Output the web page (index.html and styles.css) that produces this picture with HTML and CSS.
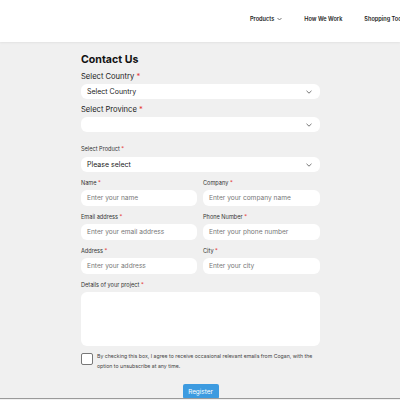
FILE: index.html
```html
<!DOCTYPE html>
<html lang="en">
<head>
    <meta charset="UTF-8">
    <meta name="viewport" content="width=device-width, initial-scale=1.0">
    <title>Contact Us</title>
    <link rel="stylesheet" href="styles.css">
</head>
<body>
    <header class="site-header">
        <nav class="nav">
            <a class="nav-item">Products
                <svg class="nav-caret" width="5" height="4" viewBox="0 0 5 4"><path d="M0.5 1 L2.5 3 L4.5 1" fill="none" stroke="#555" stroke-width="0.8"/></svg>
            </a>
            <a class="nav-item">How We Work</a>
            <a class="nav-item">Shopping Tools</a>
        </nav>
    </header>

    <main class="page">
        <form class="form">
            <h1 class="title">Contact Us</h1>

            <div class="field">
                <label class="label label-lg">Select Country <span class="req">*</span></label>
                <div class="select">
                    <span>Select Country</span>
                    <svg class="chevron" width="6" height="4" viewBox="0 0 6 4"><path d="M0.5 0.8 L3 3.2 L5.5 0.8" fill="none" stroke="#666" stroke-width="0.9"/></svg>
                </div>
            </div>

            <div class="field">
                <label class="label label-lg">Select Province <span class="req">*</span></label>
                <div class="select">
                    <span></span>
                    <svg class="chevron" width="6" height="4" viewBox="0 0 6 4"><path d="M0.5 0.8 L3 3.2 L5.5 0.8" fill="none" stroke="#666" stroke-width="0.9"/></svg>
                </div>
            </div>

            <div class="field field-product">
                <label class="label">Select Product <span class="req">*</span></label>
                <div class="select">
                    <span>Please select</span>
                    <svg class="chevron" width="6" height="4" viewBox="0 0 6 4"><path d="M0.5 0.8 L3 3.2 L5.5 0.8" fill="none" stroke="#666" stroke-width="0.9"/></svg>
                </div>
            </div>

            <div class="row">
                <div class="field">
                    <label class="label">Name <span class="req">*</span></label>
                    <div class="input placeholder">Enter your name</div>
                </div>
                <div class="field">
                    <label class="label">Company <span class="req">*</span></label>
                    <div class="input placeholder">Enter your company name</div>
                </div>
            </div>

            <div class="row">
                <div class="field">
                    <label class="label">Email address <span class="req">*</span></label>
                    <div class="input placeholder">Enter your email address</div>
                </div>
                <div class="field">
                    <label class="label">Phone Number <span class="req">*</span></label>
                    <div class="input placeholder">Enter your phone number</div>
                </div>
            </div>

            <div class="row">
                <div class="field">
                    <label class="label">Address <span class="req">*</span></label>
                    <div class="input placeholder">Enter your address</div>
                </div>
                <div class="field">
                    <label class="label">City <span class="req">*</span></label>
                    <div class="input placeholder">Enter your city</div>
                </div>
            </div>

            <div class="field">
                <label class="label">Details of your project <span class="req">*</span></label>
                <div class="textarea"></div>
            </div>

            <div class="consent">
                <span class="checkbox"></span>
                <p class="consent-text">By checking this box, I agree to receive occasional relevant emails from Cogan, with the option to unsubscribe at any time.</p>
            </div>

            <div class="actions">
                <button type="button" class="btn">Register</button>
            </div>
        </form>
    </main>
    <div class="footer-line"></div>
</body>
</html>
```

FILE: styles.css
```css
body {
    margin: 0;
    background: #f0f0f0;
    font-family: Inter, "Noto Sans", sans-serif;
    color: #222;
    overflow: hidden;
}
.site-header {
    height: 42px;
    background: #fff;
    box-shadow: 0 1px 2px rgba(0, 0, 0, 0.06);
}
.nav {
    display: flex;
    align-items: center;
    gap: 22px;
    height: 38px;
    padding-left: 250px;
    white-space: nowrap;
}
.nav-item {
    font-size: 5.6px;
    font-weight: 600;
    color: #222;
    display: flex;
    align-items: center;
    gap: 3px;
}
.page {
    padding: 11px 0 0 81px;
}
.form {
    width: 239px;
    display: flex;
    flex-direction: column;
}
.title {
    margin: 0 0 5px;
    font-size: 10.6px;
    line-height: 14px;
    font-weight: 700;
    color: #111;
}
.field {
    display: flex;
    flex-direction: column;
    gap: 3px;
    margin-bottom: 7px;
}
.label {
    font-size: 5.6px;
    line-height: 8px;
    color: #333;
}
.label-lg {
    font-size: 7.6px;
    line-height: 10px;
    color: #222;
}
.field:has(.label-lg) {
    gap: 2px;
    margin-bottom: 6px;
}
.field-product {
    margin-top: 7px;
    gap: 4px;
}
.req {
    color: #e53935;
}
.select,
.input {
    height: 15px;
    background: #fff;
    border-radius: 6px;
    display: flex;
    align-items: center;
    justify-content: space-between;
    padding: 0 8px 0 6px;
    font-size: 7px;
    color: #222;
}
.input {
    height: 16px;
    font-size: 6.6px;
}
.placeholder {
    color: #777;
}
.row {
    display: grid;
    grid-template-columns: 116px 117px;
    gap: 6px;
}
.textarea {
    height: 54px;
    background: #fff;
    border-radius: 6px;
}
.consent {
    display: flex;
    gap: 4px;
    align-items: flex-start;
}
.checkbox {
    flex: none;
    width: 10px;
    height: 10px;
    background: #fff;
    border: 0.8px solid #777;
    border-radius: 2px;
}
.consent-text {
    margin: -1px 0 0;
    font-size: 5.2px;
    line-height: 9.5px;
    color: #444;
}
.actions {
    display: flex;
    justify-content: center;
    margin-top: 13px;
}
.btn {
    width: 36px;
    height: 15px;
    padding: 0;
    border: none;
    border-radius: 2px;
    background: #3d9be0;
    color: #fff;
    font-family: inherit;
    font-size: 6.4px;
}
.footer-line {
    position: absolute;
    left: 0;
    right: 0;
    top: 398px;
    height: 1px;
    background: #9a9a9a;
}
```
